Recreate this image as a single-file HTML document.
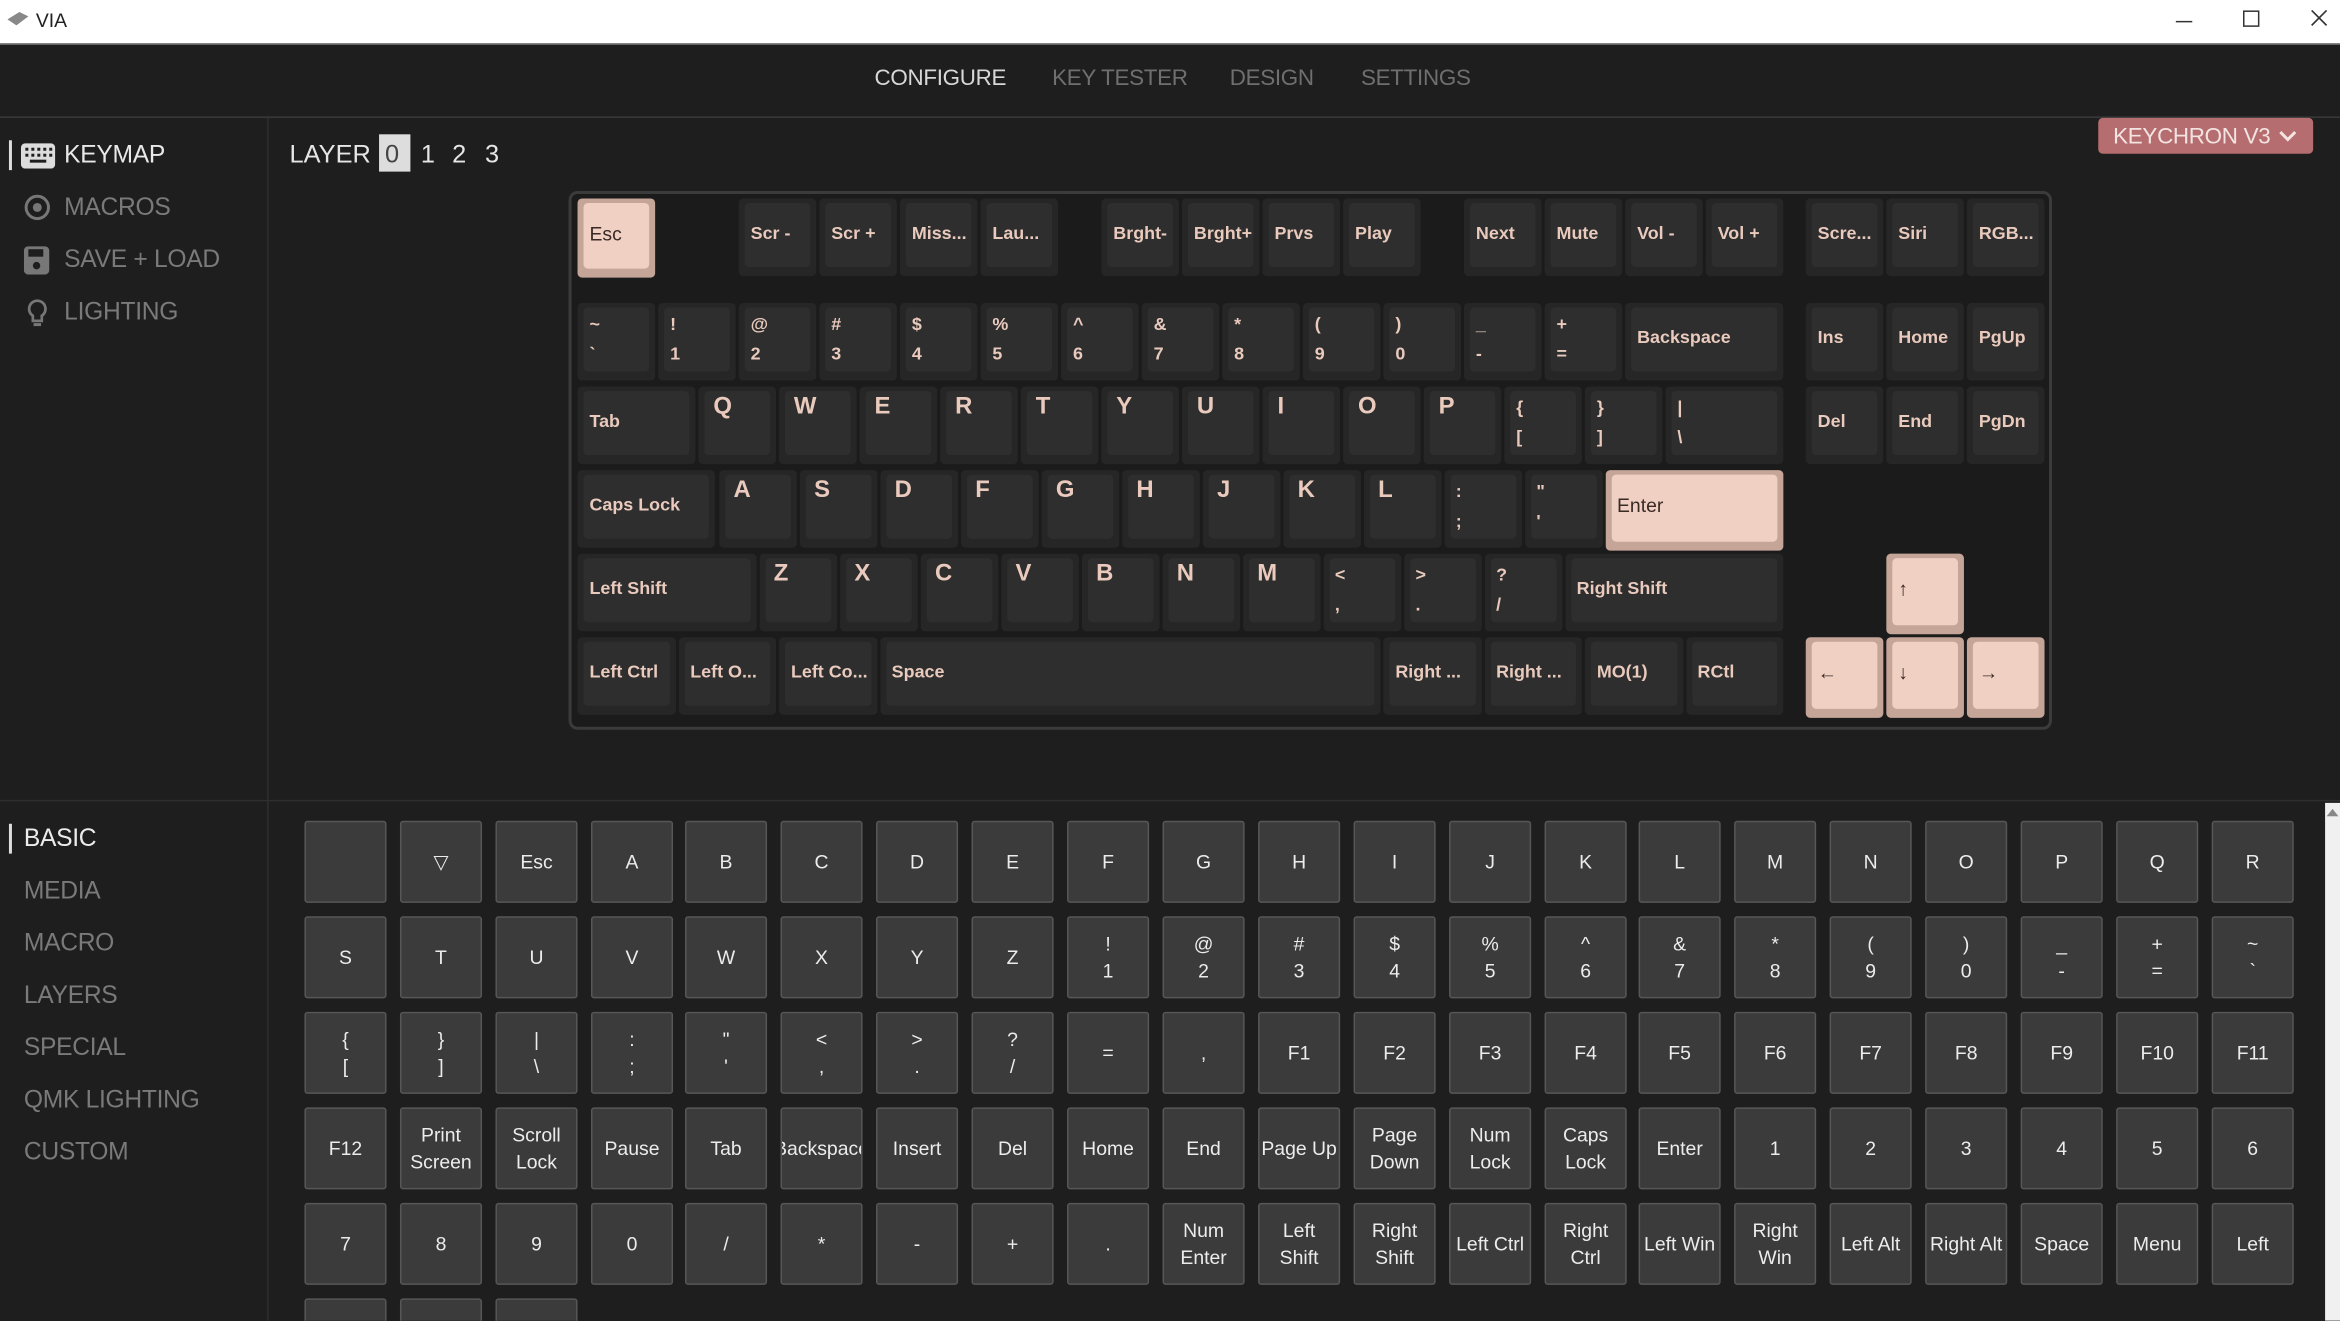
<!DOCTYPE html>
<html><head><meta charset="utf-8"><style>
html,body{margin:0;padding:0;width:2340px;height:1320px;overflow:hidden;background:#1e1e1e;}
#root{position:absolute;left:0;top:0;width:1568px;height:885px;transform:scale(1.49235);transform-origin:0 0;background:#1e1e1e;font-family:"Liberation Sans",Arial,sans-serif;overflow:hidden;}
.abs{position:absolute;}
#title{left:0;top:0;width:1568px;height:29px;background:#fff;border-bottom:1px solid #555;}
#nav{left:0;top:30px;width:1568px;height:48px;border-bottom:1px solid #3a3a3a;}
.nv{position:absolute;top:14px;font-size:15px;color:#6f6f6f;letter-spacing:-0.2px}
.side{position:absolute;font-size:16.5px;color:#7a7a7a;letter-spacing:-0.2px}
#kb{left:381px;top:128px;width:990px;height:357px;background:#1b1b1b;border:2px solid #3b3b3b;border-radius:6px;}
.k{position:absolute;height:52px;background:#262626;border-radius:3px;}
.k .c{position:absolute;left:4px;right:4px;top:3px;bottom:6px;background:#2e2e2e;border-radius:3px;color:#e9cabd;font-weight:bold;font-size:12px;padding-left:4px;box-sizing:border-box;white-space:nowrap;overflow:hidden}
.k.p{background:#c6a599}
.k.p .c{background:#f0d0c3;color:#3a2a25;font-weight:normal;font-size:13px}
.c.m{display:flex;align-items:center;padding-bottom:4px}
.c.d{line-height:20px;padding-top:1px}
.c.a{font-size:16px !important;line-height:18px;padding-top:2px;padding-left:6px !important}
.g{position:absolute;width:55px;height:55px;background:#3b3b3b;border:1px solid #575757;border-radius:2px;box-sizing:border-box;color:#ececec;font-size:13px;display:flex;align-items:center;justify-content:center;text-align:center;line-height:18px;overflow:hidden;white-space:nowrap}
</style></head><body><div id="root">

<div id="title" class="abs">
  <svg class="abs" style="left:4px;top:7px" width="16" height="12" viewBox="0 0 16 12"><path d="M1 6 L9 1 L15 4 L7 10 Z" fill="#888"/></svg>
  <div class="abs" style="left:24px;top:6px;font-size:13px;color:#222">VIA</div>
  <div class="abs" style="left:1458px;top:14px;width:11px;height:1px;background:#333"></div>
  <div class="abs" style="left:1503px;top:7px;width:9px;height:9px;border:1px solid #333"></div>
  <svg class="abs" style="left:1548px;top:6px" width="12" height="12" viewBox="0 0 12 12"><path d="M1 1L11 11M11 1L1 11" stroke="#333" stroke-width="1.1"/></svg>
</div>

<div id="nav" class="abs">
  <div class="nv" style="left:586px;color:#d8d8d8">CONFIGURE</div>
  <div class="nv" style="left:705px">KEY TESTER</div>
  <div class="nv" style="left:824px">DESIGN</div>
  <div class="nv" style="left:912px">SETTINGS</div>
</div>

<div class="abs" style="left:179px;top:79px;width:1px;height:806px;background:#2e2e2e"></div>
<div class="abs" style="left:0;top:536px;width:1568px;height:1px;background:#2e2e2e"></div>

<div class="abs" style="left:6px;top:94px;width:2px;height:20px;background:#ddd"></div>
<svg class="abs" style="left:14px;top:96px" width="23" height="17" viewBox="0 0 23 17"><rect x="0" y="0" width="23" height="17" rx="3" fill="#ddd"/><g fill="#1e1e1e"><rect x="3" y="3" width="2" height="2"/><rect x="7" y="3" width="2" height="2"/><rect x="11" y="3" width="2" height="2"/><rect x="15" y="3" width="2" height="2"/><rect x="19" y="3" width="2" height="2"/><rect x="3" y="7" width="2" height="2"/><rect x="7" y="7" width="2" height="2"/><rect x="11" y="7" width="2" height="2"/><rect x="15" y="7" width="2" height="2"/><rect x="19" y="7" width="2" height="2"/><rect x="6" y="11" width="11" height="2"/></g></svg>
<div class="side" style="left:43px;top:95px;color:#e8e8e8">KEYMAP</div>
<svg class="abs" style="left:16px;top:130px" width="18" height="18" viewBox="0 0 18 18"><circle cx="9" cy="9" r="7.5" fill="none" stroke="#777" stroke-width="2"/><circle cx="9" cy="9" r="3" fill="#777"/></svg>
<div class="side" style="left:43px;top:130px">MACROS</div>
<svg class="abs" style="left:16px;top:165px" width="18" height="19" viewBox="0 0 18 19"><rect x="0" y="0" width="17" height="19" rx="3" fill="#777"/><rect x="3" y="2" width="10" height="5" fill="#1e1e1e"/><circle cx="8.5" cy="13" r="2.5" fill="#1e1e1e"/></svg>
<div class="side" style="left:43px;top:165px">SAVE + LOAD</div>
<svg class="abs" style="left:18px;top:200px" width="14" height="20" viewBox="0 0 14 20"><path d="M7 1.5a5.5 5.5 0 0 0-3 10.1V15h6v-3.4A5.5 5.5 0 0 0 7 1.5z" fill="none" stroke="#777" stroke-width="1.8"/><rect x="4.5" y="16.5" width="5" height="2" fill="#777"/></svg>
<div class="side" style="left:43px;top:200px">LIGHTING</div>

<div class="abs" style="left:194px;top:94px;font-size:17px;color:#e6e6e6">LAYER</div>
<div class="abs" style="left:254px;top:90px;width:21px;height:25px;background:#ddd"></div>
<div class="abs" style="left:258px;top:94px;font-size:17px;color:#444">0</div>
<div class="abs" style="left:282px;top:94px;font-size:17px;color:#e6e6e6">1</div>
<div class="abs" style="left:303px;top:94px;font-size:17px;color:#e6e6e6">2</div>
<div class="abs" style="left:325px;top:94px;font-size:17px;color:#e6e6e6">3</div>

<div class="abs" style="left:1406px;top:79px;width:144px;height:24px;background:#b56d6f;border-radius:3px;"></div>
<div class="abs" style="left:1416px;top:83px;font-size:15px;color:#f3e4e2;letter-spacing:-0.2px">KEYCHRON V3</div>
<svg class="abs" style="left:1527px;top:87px" width="12" height="9" viewBox="0 0 12 9"><path d="M1 1.5L6 6.5L11 1.5" fill="none" stroke="#f3e4e2" stroke-width="2"/></svg>

<div id="kb" class="abs">
<div class="k p" style="left:4px;top:3px;width:52px;height:53px"><div class="c m">Esc</div></div>
<div class="k" style="left:112px;top:3px;width:52px"><div class="c m">Scr -</div></div>
<div class="k" style="left:166px;top:3px;width:52px"><div class="c m">Scr +</div></div>
<div class="k" style="left:220px;top:3px;width:52px"><div class="c m">Miss...</div></div>
<div class="k" style="left:274px;top:3px;width:52px"><div class="c m">Lau...</div></div>
<div class="k" style="left:355px;top:3px;width:52px"><div class="c m">Brght-</div></div>
<div class="k" style="left:409px;top:3px;width:52px"><div class="c m">Brght+</div></div>
<div class="k" style="left:463px;top:3px;width:52px"><div class="c m">Prvs</div></div>
<div class="k" style="left:517px;top:3px;width:52px"><div class="c m">Play</div></div>
<div class="k" style="left:598px;top:3px;width:52px"><div class="c m">Next</div></div>
<div class="k" style="left:652px;top:3px;width:52px"><div class="c m">Mute</div></div>
<div class="k" style="left:706px;top:3px;width:52px"><div class="c m">Vol -</div></div>
<div class="k" style="left:760px;top:3px;width:52px"><div class="c m">Vol +</div></div>
<div class="k" style="left:827px;top:3px;width:52px"><div class="c m">Scre...</div></div>
<div class="k" style="left:881px;top:3px;width:52px"><div class="c m">Siri</div></div>
<div class="k" style="left:935px;top:3px;width:52px"><div class="c m">RGB...</div></div>
<div class="k" style="left:4px;top:73px;width:52px"><div class="c d">~<br>`</div></div>
<div class="k" style="left:58px;top:73px;width:52px"><div class="c d">!<br>1</div></div>
<div class="k" style="left:112px;top:73px;width:52px"><div class="c d">@<br>2</div></div>
<div class="k" style="left:166px;top:73px;width:52px"><div class="c d">#<br>3</div></div>
<div class="k" style="left:220px;top:73px;width:52px"><div class="c d">$<br>4</div></div>
<div class="k" style="left:274px;top:73px;width:52px"><div class="c d">%<br>5</div></div>
<div class="k" style="left:328px;top:73px;width:52px"><div class="c d">^<br>6</div></div>
<div class="k" style="left:382px;top:73px;width:52px"><div class="c d">&amp;<br>7</div></div>
<div class="k" style="left:436px;top:73px;width:52px"><div class="c d">*<br>8</div></div>
<div class="k" style="left:490px;top:73px;width:52px"><div class="c d">(<br>9</div></div>
<div class="k" style="left:544px;top:73px;width:52px"><div class="c d">)<br>0</div></div>
<div class="k" style="left:598px;top:73px;width:52px"><div class="c d">_<br>-</div></div>
<div class="k" style="left:652px;top:73px;width:52px"><div class="c d">+<br>=</div></div>
<div class="k" style="left:706px;top:73px;width:106px"><div class="c m">Backspace</div></div>
<div class="k" style="left:827px;top:73px;width:52px"><div class="c m">Ins</div></div>
<div class="k" style="left:881px;top:73px;width:52px"><div class="c m">Home</div></div>
<div class="k" style="left:935px;top:73px;width:52px"><div class="c m">PgUp</div></div>
<div class="k" style="left:4px;top:129px;width:79px"><div class="c m">Tab</div></div>
<div class="k" style="left:85px;top:129px;width:52px"><div class="c a">Q</div></div>
<div class="k" style="left:139px;top:129px;width:52px"><div class="c a">W</div></div>
<div class="k" style="left:193px;top:129px;width:52px"><div class="c a">E</div></div>
<div class="k" style="left:247px;top:129px;width:52px"><div class="c a">R</div></div>
<div class="k" style="left:301px;top:129px;width:52px"><div class="c a">T</div></div>
<div class="k" style="left:355px;top:129px;width:52px"><div class="c a">Y</div></div>
<div class="k" style="left:409px;top:129px;width:52px"><div class="c a">U</div></div>
<div class="k" style="left:463px;top:129px;width:52px"><div class="c a">I</div></div>
<div class="k" style="left:517px;top:129px;width:52px"><div class="c a">O</div></div>
<div class="k" style="left:571px;top:129px;width:52px"><div class="c a">P</div></div>
<div class="k" style="left:625px;top:129px;width:52px"><div class="c d">{<br>[</div></div>
<div class="k" style="left:679px;top:129px;width:52px"><div class="c d">}<br>]</div></div>
<div class="k" style="left:733px;top:129px;width:79px"><div class="c d">|<br>\</div></div>
<div class="k" style="left:827px;top:129px;width:52px"><div class="c m">Del</div></div>
<div class="k" style="left:881px;top:129px;width:52px"><div class="c m">End</div></div>
<div class="k" style="left:935px;top:129px;width:52px"><div class="c m">PgDn</div></div>
<div class="k" style="left:4px;top:185px;width:92px"><div class="c m">Caps Lock</div></div>
<div class="k" style="left:98.5px;top:185px;width:52px"><div class="c a">A</div></div>
<div class="k" style="left:152.5px;top:185px;width:52px"><div class="c a">S</div></div>
<div class="k" style="left:206.5px;top:185px;width:52px"><div class="c a">D</div></div>
<div class="k" style="left:260.5px;top:185px;width:52px"><div class="c a">F</div></div>
<div class="k" style="left:314.5px;top:185px;width:52px"><div class="c a">G</div></div>
<div class="k" style="left:368.5px;top:185px;width:52px"><div class="c a">H</div></div>
<div class="k" style="left:422.5px;top:185px;width:52px"><div class="c a">J</div></div>
<div class="k" style="left:476.5px;top:185px;width:52px"><div class="c a">K</div></div>
<div class="k" style="left:530.5px;top:185px;width:52px"><div class="c a">L</div></div>
<div class="k" style="left:584.5px;top:185px;width:52px"><div class="c d">:<br>;</div></div>
<div class="k" style="left:638.5px;top:185px;width:52px"><div class="c d">"<br>'</div></div>
<div class="k p" style="left:692.5px;top:185px;width:119.5px;height:54px"><div class="c m">Enter</div></div>
<div class="k" style="left:4px;top:241px;width:119.5px"><div class="c m">Left Shift</div></div>
<div class="k" style="left:125.5px;top:241px;width:52px"><div class="c a">Z</div></div>
<div class="k" style="left:179.5px;top:241px;width:52px"><div class="c a">X</div></div>
<div class="k" style="left:233.5px;top:241px;width:52px"><div class="c a">C</div></div>
<div class="k" style="left:287.5px;top:241px;width:52px"><div class="c a">V</div></div>
<div class="k" style="left:341.5px;top:241px;width:52px"><div class="c a">B</div></div>
<div class="k" style="left:395.5px;top:241px;width:52px"><div class="c a">N</div></div>
<div class="k" style="left:449.5px;top:241px;width:52px"><div class="c a">M</div></div>
<div class="k" style="left:503.5px;top:241px;width:52px"><div class="c d">&lt;<br>,</div></div>
<div class="k" style="left:557.5px;top:241px;width:52px"><div class="c d">&gt;<br>.</div></div>
<div class="k" style="left:611.5px;top:241px;width:52px"><div class="c d">?<br>/</div></div>
<div class="k" style="left:665.5px;top:241px;width:146.5px"><div class="c m">Right Shift</div></div>
<div class="k p" style="left:881px;top:241px;width:52px;height:54px"><div class="c m">↑</div></div>
<div class="k" style="left:4px;top:297px;width:65.5px"><div class="c m">Left Ctrl</div></div>
<div class="k" style="left:71.5px;top:297px;width:65.5px"><div class="c m">Left O...</div></div>
<div class="k" style="left:139px;top:297px;width:65.5px"><div class="c m">Left Co...</div></div>
<div class="k" style="left:206.5px;top:297px;width:335.5px"><div class="c m">Space</div></div>
<div class="k" style="left:544px;top:297px;width:65.5px"><div class="c m">Right ...</div></div>
<div class="k" style="left:611.5px;top:297px;width:65.5px"><div class="c m">Right ...</div></div>
<div class="k" style="left:679px;top:297px;width:65.5px"><div class="c m">MO(1)</div></div>
<div class="k" style="left:746.5px;top:297px;width:65.5px"><div class="c m">RCtl</div></div>
<div class="k p" style="left:827px;top:297px;width:52px;height:54px"><div class="c m">←</div></div>
<div class="k p" style="left:881px;top:297px;width:52px;height:54px"><div class="c m">↓</div></div>
<div class="k p" style="left:935px;top:297px;width:52px;height:54px"><div class="c m">→</div></div>
</div>

<div class="abs" style="left:6px;top:552px;width:2px;height:20px;background:#ddd"></div>
<div class="side" style="left:16px;top:553px;color:#ececec">BASIC</div>
<div class="side" style="left:16px;top:588px">MEDIA</div>
<div class="side" style="left:16px;top:623px">MACRO</div>
<div class="side" style="left:16px;top:658px">LAYERS</div>
<div class="side" style="left:16px;top:693px">SPECIAL</div>
<div class="side" style="left:16px;top:728px">QMK LIGHTING</div>
<div class="side" style="left:16px;top:763px">CUSTOM</div>

<div class="g" style="left:204px;top:550px"></div>
<div class="g" style="left:268px;top:550px">▽</div>
<div class="g" style="left:332px;top:550px">Esc</div>
<div class="g" style="left:396px;top:550px">A</div>
<div class="g" style="left:459px;top:550px">B</div>
<div class="g" style="left:523px;top:550px">C</div>
<div class="g" style="left:587px;top:550px">D</div>
<div class="g" style="left:651px;top:550px">E</div>
<div class="g" style="left:715px;top:550px">F</div>
<div class="g" style="left:779px;top:550px">G</div>
<div class="g" style="left:843px;top:550px">H</div>
<div class="g" style="left:907px;top:550px">I</div>
<div class="g" style="left:971px;top:550px">J</div>
<div class="g" style="left:1035px;top:550px">K</div>
<div class="g" style="left:1098px;top:550px">L</div>
<div class="g" style="left:1162px;top:550px">M</div>
<div class="g" style="left:1226px;top:550px">N</div>
<div class="g" style="left:1290px;top:550px">O</div>
<div class="g" style="left:1354px;top:550px">P</div>
<div class="g" style="left:1418px;top:550px">Q</div>
<div class="g" style="left:1482px;top:550px">R</div>
<div class="g" style="left:204px;top:614px">S</div>
<div class="g" style="left:268px;top:614px">T</div>
<div class="g" style="left:332px;top:614px">U</div>
<div class="g" style="left:396px;top:614px">V</div>
<div class="g" style="left:459px;top:614px">W</div>
<div class="g" style="left:523px;top:614px">X</div>
<div class="g" style="left:587px;top:614px">Y</div>
<div class="g" style="left:651px;top:614px">Z</div>
<div class="g" style="left:715px;top:614px">!<br>1</div>
<div class="g" style="left:779px;top:614px">@<br>2</div>
<div class="g" style="left:843px;top:614px">#<br>3</div>
<div class="g" style="left:907px;top:614px">$<br>4</div>
<div class="g" style="left:971px;top:614px">%<br>5</div>
<div class="g" style="left:1035px;top:614px">^<br>6</div>
<div class="g" style="left:1098px;top:614px">&amp;<br>7</div>
<div class="g" style="left:1162px;top:614px">*<br>8</div>
<div class="g" style="left:1226px;top:614px">(<br>9</div>
<div class="g" style="left:1290px;top:614px">)<br>0</div>
<div class="g" style="left:1354px;top:614px">_<br>-</div>
<div class="g" style="left:1418px;top:614px">+<br>=</div>
<div class="g" style="left:1482px;top:614px">~<br>`</div>
<div class="g" style="left:204px;top:678px">{<br>[</div>
<div class="g" style="left:268px;top:678px">}<br>]</div>
<div class="g" style="left:332px;top:678px">|<br>\</div>
<div class="g" style="left:396px;top:678px">:<br>;</div>
<div class="g" style="left:459px;top:678px">"<br>'</div>
<div class="g" style="left:523px;top:678px">&lt;<br>,</div>
<div class="g" style="left:587px;top:678px">&gt;<br>.</div>
<div class="g" style="left:651px;top:678px">?<br>/</div>
<div class="g" style="left:715px;top:678px">=</div>
<div class="g" style="left:779px;top:678px">,</div>
<div class="g" style="left:843px;top:678px">F1</div>
<div class="g" style="left:907px;top:678px">F2</div>
<div class="g" style="left:971px;top:678px">F3</div>
<div class="g" style="left:1035px;top:678px">F4</div>
<div class="g" style="left:1098px;top:678px">F5</div>
<div class="g" style="left:1162px;top:678px">F6</div>
<div class="g" style="left:1226px;top:678px">F7</div>
<div class="g" style="left:1290px;top:678px">F8</div>
<div class="g" style="left:1354px;top:678px">F9</div>
<div class="g" style="left:1418px;top:678px">F10</div>
<div class="g" style="left:1482px;top:678px">F11</div>
<div class="g" style="left:204px;top:742px">F12</div>
<div class="g" style="left:268px;top:742px">Print<br>Screen</div>
<div class="g" style="left:332px;top:742px">Scroll<br>Lock</div>
<div class="g" style="left:396px;top:742px">Pause</div>
<div class="g" style="left:459px;top:742px">Tab</div>
<div class="g" style="left:523px;top:742px">Backspace</div>
<div class="g" style="left:587px;top:742px">Insert</div>
<div class="g" style="left:651px;top:742px">Del</div>
<div class="g" style="left:715px;top:742px">Home</div>
<div class="g" style="left:779px;top:742px">End</div>
<div class="g" style="left:843px;top:742px">Page Up</div>
<div class="g" style="left:907px;top:742px">Page<br>Down</div>
<div class="g" style="left:971px;top:742px">Num<br>Lock</div>
<div class="g" style="left:1035px;top:742px">Caps<br>Lock</div>
<div class="g" style="left:1098px;top:742px">Enter</div>
<div class="g" style="left:1162px;top:742px">1</div>
<div class="g" style="left:1226px;top:742px">2</div>
<div class="g" style="left:1290px;top:742px">3</div>
<div class="g" style="left:1354px;top:742px">4</div>
<div class="g" style="left:1418px;top:742px">5</div>
<div class="g" style="left:1482px;top:742px">6</div>
<div class="g" style="left:204px;top:806px">7</div>
<div class="g" style="left:268px;top:806px">8</div>
<div class="g" style="left:332px;top:806px">9</div>
<div class="g" style="left:396px;top:806px">0</div>
<div class="g" style="left:459px;top:806px">/</div>
<div class="g" style="left:523px;top:806px">*</div>
<div class="g" style="left:587px;top:806px">-</div>
<div class="g" style="left:651px;top:806px">+</div>
<div class="g" style="left:715px;top:806px">.</div>
<div class="g" style="left:779px;top:806px">Num<br>Enter</div>
<div class="g" style="left:843px;top:806px">Left<br>Shift</div>
<div class="g" style="left:907px;top:806px">Right<br>Shift</div>
<div class="g" style="left:971px;top:806px">Left Ctrl</div>
<div class="g" style="left:1035px;top:806px">Right<br>Ctrl</div>
<div class="g" style="left:1098px;top:806px">Left Win</div>
<div class="g" style="left:1162px;top:806px">Right<br>Win</div>
<div class="g" style="left:1226px;top:806px">Left Alt</div>
<div class="g" style="left:1290px;top:806px">Right Alt</div>
<div class="g" style="left:1354px;top:806px">Space</div>
<div class="g" style="left:1418px;top:806px">Menu</div>
<div class="g" style="left:1482px;top:806px">Left</div>
<div class="g" style="left:204px;top:870px"></div>
<div class="g" style="left:268px;top:870px"></div>
<div class="g" style="left:332px;top:870px"></div>

<div class="abs" style="left:1558px;top:538px;width:10px;height:347px;background:#f0f0f0"></div>
<svg class="abs" style="left:1559px;top:541px" width="8" height="6" viewBox="0 0 8 6"><path d="M0 6L4 1L8 6Z" fill="#888"/></svg>

</div></body></html>
